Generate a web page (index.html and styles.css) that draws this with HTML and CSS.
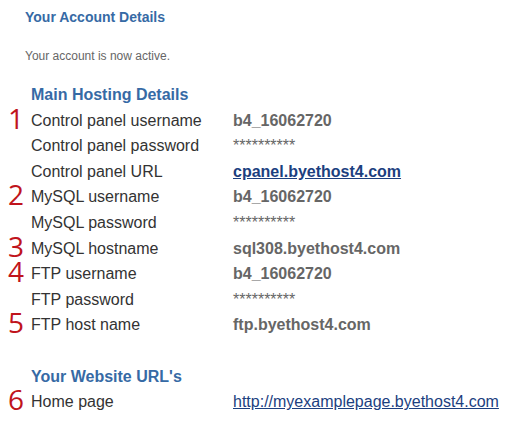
FILE: index.html
```html
<!DOCTYPE html>
<html lang="en">
<head>
    <meta charset="UTF-8">
    <meta name="viewport" content="width=device-width, initial-scale=1.0">
    <title>Your Account Details</title>
    <link rel="stylesheet" href="styles.css">
</head>
<body>

<div class="account">
    <h2 class="account-title">Your Account Details</h2>
    <p class="account-status">Your account is now active.</p>

    <div class="details">
        <div class="num"></div>
        <h3 class="section-title">Main Hosting Details</h3>

        <div class="num">1</div>
        <div class="label">Control panel username</div>
        <div class="value">b4_16062720</div>

        <div class="num"></div>
        <div class="label">Control panel password</div>
        <div class="value secret">**********</div>

        <div class="num"></div>
        <div class="label">Control panel URL</div>
        <div class="value"><a href="#" class="link-bold">cpanel.byethost4.com</a></div>

        <div class="num">2</div>
        <div class="label">MySQL username</div>
        <div class="value">b4_16062720</div>

        <div class="num"></div>
        <div class="label">MySQL password</div>
        <div class="value secret">**********</div>

        <div class="num">3</div>
        <div class="label">MySQL hostname</div>
        <div class="value">sql308.byethost4.com</div>

        <div class="num">4</div>
        <div class="label">FTP username</div>
        <div class="value">b4_16062720</div>

        <div class="num"></div>
        <div class="label">FTP password</div>
        <div class="value secret">**********</div>

        <div class="num">5</div>
        <div class="label">FTP host name</div>
        <div class="value">ftp.byethost4.com</div>

        <div class="spacer"></div>

        <div class="num"></div>
        <h3 class="section-title">Your Website URL's</h3>

        <div class="num">6</div>
        <div class="label">Home page</div>
        <div class="value"><a href="#" class="link">http://myexamplepage.byethost4.com</a></div>
    </div>
</div>

</body>
</html>
```

FILE: styles.css
```css
/* Base */
body {
    margin: 0;
    padding: 0;
    background-color: #fff;
    font-family: 'Liberation Sans', Arial, sans-serif;
    color: #333;
}

.account {
    padding-top: 7px;
}

.account-title {
    margin: 0 0 21px 25px;
    font-size: 14px;
    line-height: 20px;
    font-weight: bold;
    color: #366aa5;
}

.account-status {
    margin: 0 0 18px 25px;
    font-size: 12px;
    line-height: 16px;
    color: #666;
}

/* Details grid */
.details {
    display: grid;
    grid-template-columns: 31px 202px 1fr;
    grid-auto-rows: 25.6px;
    align-items: start;
    font-size: 16px;
    line-height: 25.6px;
}

.section-title {
    grid-column: 2 / 4;
    margin: 0;
    font-size: 16px;
    line-height: 25.6px;
    font-weight: bold;
    color: #366aa5;
}

.num {
    padding-left: 8px;
    font-family: 'Open Sans', sans-serif;
    font-weight: 400;
    font-size: 28px;
    line-height: 21px;
    color: #c0141c;
}

.label {
    color: #333;
}

.value {
    font-weight: bold;
    color: #666;
    white-space: nowrap;
}

.value.secret {
    font-weight: normal;
}

.spacer {
    grid-column: 1 / 4;
}

.link-bold,
.link {
    color: #1c3f7f;
}

.link {
    font-weight: normal;
}
```
